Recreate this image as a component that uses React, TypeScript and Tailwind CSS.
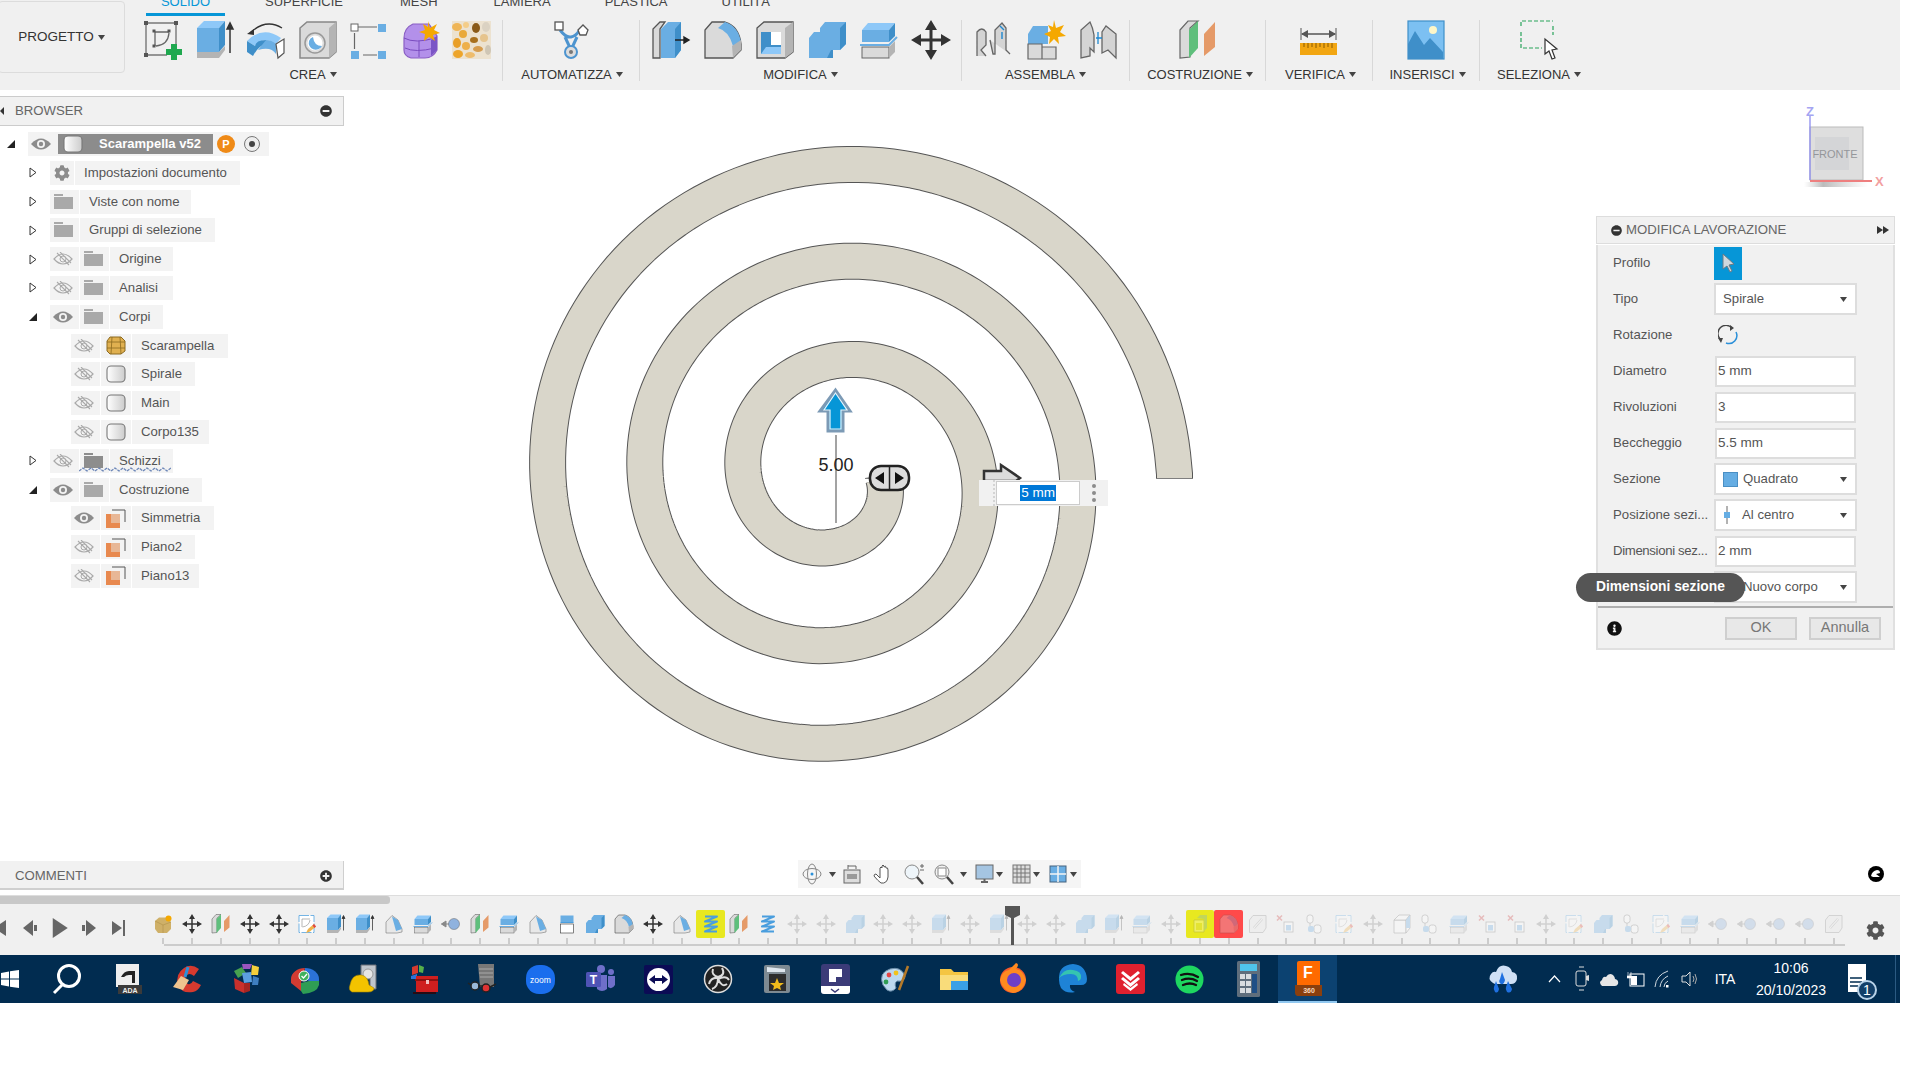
import React from "react";
import { FaCog, FaInfoCircle, FaMinusCircle, FaPlusCircle } from "react-icons/fa";

type IconProps = { size?: number };

const Svg = ({ size = 40, children }: IconProps & { children: React.ReactNode }) => (
  <svg width={size} height={size} viewBox="0 0 40 40" className="shrink-0">{children}</svg>
);

const BLUE = "#6aaee3", TOP = "#8ec8f8", SIDE = "#3f8fc9", GR = "#dadada", GS = "#b4b4b4";

const SketchIcon = ({ size }: IconProps) => (
  <Svg size={size}>
    <path d="M3 3H33M3 3V35M3 35H24M33 3V24" stroke="#777" strokeWidth="1.4" fill="none" />
    {[[3, 3], [33, 3], [3, 35]].map(([x, y]) => <rect key={x + "-" + y} x={x - 2} y={y - 2} width="4" height="4" fill="#555" />)}
    <path d="M12 12H26M12 12V26M13 26Q25 25 26 13" stroke="#666" strokeWidth="1.3" fill="none" />
    {[[11, 11], [26, 11], [11, 26]].map(([x, y]) => <rect key={x + "-" + y} x={x - 1.5} y={y - 1.5} width="3" height="3" fill="#555" />)}
    <path d="M28 24h6v5h5v6h-5v5h-6v-5h-5v-6h5z" fill="#1fa84f" />
  </Svg>
);
const ExtrudeIcon = ({ size }: IconProps) => (
  <Svg size={size}>
    <path d="M2 32H24L30 26V30L24 38H2Z" fill={GS} />
    <path d="M2 8L9 1H30L24 8Z" fill={TOP} />
    <path d="M24 8L30 1V25L24 32Z" fill={SIDE} />
    <rect x="2" y="8" width="22" height="24" fill={BLUE} />
    <path d="M35 33V5M32 9L35 3L38 9Z" stroke="#333" strokeWidth="1.5" fill="#333" />
  </Svg>
);
const RevolveIcon = ({ size }: IconProps) => (
  <Svg size={size}>
    <path d="M4 13Q20 -2 36 8" stroke="#333" strokeWidth="1.3" fill="none" />
    <path d="M1 14L8 9L8 15Z" fill="#333" />
    <path d="M1 21Q17 5 35 18L30 24Q18 15 9 26Z" fill={TOP} />
    <path d="M1 21V32L7 36Q12 26 20 24V20Q10 20 9 26Z" fill={SIDE} />
    <path d="M20 20Q26 20 30 24V34Q25 26 12 30Z" fill={BLUE} />
    <path d="M30 24L38 19V33L32 38Z" fill="#fff" stroke="#555" strokeWidth="1.2" />
  </Svg>
);
const HoleIcon = ({ size }: IconProps) => (
  <Svg size={size}>
    <path d="M2 8L9 2H38V32L31 38H2Z" fill={GR} stroke="#888" strokeWidth="1.5" />
    <path d="M31 8L38 2V32L31 38Z" fill={GS} />
    <circle cx="17" cy="23" r="10" fill="#ddd" stroke="#999" strokeWidth="1.5" />
    <circle cx="17" cy="23" r="7.5" fill="#fff" />
    <path d="M11 21A7 7 0 0 0 24 26Q16 26 15 17Q12 18 11 21Z" fill={BLUE} />
  </Svg>
);
const FormIcon = ({ size }: IconProps) => (
  <Svg size={size}>
    <path d="M9 7H28M14 35H28" stroke="#666" strokeWidth="1.2" fill="none" />
    <rect x="2" y="4" width="7" height="7" fill="#fff" stroke="#666" />
    {[[29, 4], [2, 31], [29, 31]].map(([x, y]) => <rect key={x + "-" + y} x={x} y={y} width="8" height="8" fill={BLUE} />)}
    <path d="M5.5 13V29" stroke="#666" strokeWidth="1.2" />
  </Svg>
);
const PrimitiveIcon = ({ size }: IconProps) => (
  <Svg size={size}>
    <path d="M3 18Q3 8 12 4H28L36 16V30Q32 38 24 38H10Q3 36 3 30Z" fill="#b390ea" stroke="#8a5fc4" strokeWidth="1.2" />
    <path d="M3 18Q14 24 34 18M18 21V37M4 28Q14 33 34 28" stroke="#7a4cc0" strokeWidth="1" fill="none" />
    <path d="M30 20L36 16V30L30 36Z" fill="#7b55c6" />
    <path d="M27 1L29 8L36 4L33 10L39 13L32 15L34 21L28 17L23 21L24 14L18 12L24 10L22 4L27 7Z" fill="#f5a800" />
  </Svg>
);
const TextureIcon = ({ size }: IconProps) => (
  <Svg size={size}>
    <rect x="0" y="1" width="39" height="38" fill="#ece2d0" />
    <ellipse cx="5" cy="7" rx="5" ry="4" fill="#efb556" />
    <ellipse cx="14" cy="5" rx="3" ry="3" fill="#f4cd88" />
    <ellipse cx="24" cy="8" rx="4" ry="5" fill="#8a5a18" />
    <ellipse cx="34" cy="7" rx="4" ry="5" fill="#dbd2c2" />
    <ellipse cx="11" cy="14" rx="4" ry="4" fill="#e9a93a" />
    <ellipse cx="22" cy="20" rx="4" ry="3" fill="#a8701e" />
    <ellipse cx="32" cy="18" rx="4" ry="4" fill="#e6c48d" />
    <ellipse cx="5" cy="23" rx="4" ry="5" fill="#e99f26" />
    <ellipse cx="14" cy="26" rx="4" ry="4" fill="#eeb04a" />
    <ellipse cx="26" cy="29" rx="5" ry="3" fill="#d69c4e" />
    <ellipse cx="36" cy="30" rx="3" ry="5" fill="#cfc6b5" />
    <ellipse cx="6" cy="34" rx="5" ry="4" fill="#eda52b" />
    <ellipse cx="18" cy="35" rx="5" ry="3" fill="#eebc6c" />
  </Svg>
);
const AutomateIcon = ({ size }: IconProps) => (
  <Svg size={size}>
    <path d="M9 10Q15 18 20 17Q25 16 28 11M14 17L20 30L26 17" stroke="#4d94cf" strokeWidth="3" fill="none" />
    <rect x="4" y="2" width="8" height="8" fill="#fff" stroke="#555" strokeWidth="1.3" />
    <path d="M27 10L32 5L37 10L35 15H29Z" fill="#fff" stroke="#555" strokeWidth="1.3" />
    <circle cx="20" cy="32" r="6" fill="#ddd" stroke="#4d94cf" strokeWidth="2" />
    <circle cx="20" cy="32" r="2" fill="#777" />
  </Svg>
);
const PressIcon = ({ size }: IconProps) => (
  <Svg size={size}>
    <path d="M2 38V9L9 2H14L9 9V38Z" fill={GR} stroke="#555" strokeWidth="1.3" />
    <path d="M10 9L17 2H30V30L24 38H10Z" fill={BLUE} />
    <path d="M24 9L30 2V30L24 38Z" fill={SIDE} />
    <path d="M24 20H36M33 17L38 20L33 23Z" stroke="#222" strokeWidth="1.4" fill="#222" />
  </Svg>
);
const FilletIcon = ({ size }: IconProps) => (
  <Svg size={size}>
    <path d="M2 38V10L9 2H22Q36 6 38 24V30L30 38Z" fill={GR} stroke="#555" strokeWidth="1.3" />
    <path d="M15 8L22 2Q35 6 38 22L30 26Q26 11 15 8Z" fill={BLUE} />
    <path d="M29 26L38 20V30L30 38Z" fill={GS} />
  </Svg>
);
const ShellIcon = ({ size }: IconProps) => (
  <Svg size={size}>
    <path d="M2 8L9 2H38V32L30 38H2Z" fill={GR} stroke="#555" strokeWidth="1.3" />
    <path d="M30 8L38 2V32L30 38Z" fill={GS} />
    <rect x="6" y="12" width="20" height="22" fill="#fff" />
    <path d="M6 12H16V25H26V34H6Z" fill={SIDE} />
    <path d="M11 27H26V34H6Z" fill={TOP} />
  </Svg>
);
const CombineIcon = ({ size }: IconProps) => (
  <Svg size={size}>
    <path d="M13 8L18 2H39V24L33 30H24V38H2V18L7 12H13Z" fill={BLUE} />
    <path d="M33 8L39 2V24L33 30Z" fill={SIDE} />
    <path d="M24 30L20 38H26V30Z" fill={SIDE} />
  </Svg>
);
const SplitIcon = ({ size }: IconProps) => (
  <Svg size={size}>
    <path d="M3 10L9 3H36L30 10Z" fill={TOP} />
    <rect x="3" y="10" width="27" height="12" fill={BLUE} />
    <path d="M30 10L36 3V16L30 22Z" fill={SIDE} />
    <path d="M1 25H30L38 17" stroke={BLUE} strokeWidth="2" fill="none" />
    <rect x="3" y="27" width="27" height="11" fill={GR} stroke="#666" strokeWidth="1" />
    <path d="M30 27L36 21V32L30 38Z" fill={GS} />
  </Svg>
);
const MoveIcon = ({ size, color = "#333" }: IconProps & { color?: string }) => (
  <Svg size={size}>
    <path d="M20 4V36M4 20H36" stroke={color} strokeWidth="3" />
    <path d="M20 0L26 10H14ZM20 40L26 30H14ZM0 20L10 14V26ZM40 20L30 14V26Z" fill={color} />
  </Svg>
);
const JointIcon = ({ size }: IconProps) => (
  <Svg size={size}>
    <path d="M3 36V12Q8 6 12 12V25L7 30L12 36M16 20L19 34H21V10L28 3L32 8V30L36 34" stroke="#666" strokeWidth="1.3" fill="#d4d4d4" />
    <path d="M26 6L30 10M28 12V19" stroke="#1e88d0" strokeWidth="1.4" />
  </Svg>
);
const NewCompIcon = ({ size }: IconProps) => (
  <Svg size={size}>
    <path d="M2 14L7 6H22V24H2Z" fill={BLUE} />
    <path d="M2 24H16V39H2ZM16 27H30V39H16Z" fill={GR} stroke="#666" strokeWidth="1.2" />
    <path d="M28 0L30 8L38 5L34 12L40 16L32 17L33 24L28 19L23 24L24 17L18 14L25 11L22 5L27 7Z" fill="#f5a800" />
  </Svg>
);
const JointAsBuiltIcon = ({ size }: IconProps) => (
  <Svg size={size}>
    <path d="M3 38V10L12 2Q15 8 16 15V32L12 28V36ZM24 33V12L28 6L38 14V38L30 30Z" fill="#d4d4d4" stroke="#666" strokeWidth="1.3" />
    <path d="M20 12V24M18 18H24" stroke="#1e88d0" strokeWidth="1.3" />
  </Svg>
);
const PlaneIcon = ({ size }: IconProps) => (
  <Svg size={size}>
    <path d="M2 10L10 1H20L12 8V37L2 38Z" fill={GR} stroke="#666" strokeWidth="1.2" />
    <path d="M11 38V10L20 1V28Z" fill="#5fbf7c" />
    <path d="M26 36V14L37 2V27Z" fill="#e59a68" />
  </Svg>
);
const MeasureIcon = ({ size }: IconProps) => (
  <Svg size={size}>
    <path d="M2 8V20M37 8V20" stroke="#555" strokeWidth="1" />
    <path d="M3 14H36" stroke="#555" strokeWidth="1.5" />
    <path d="M2 14L9 10V18ZM37 14L30 10V18Z" fill="#555" />
    <rect x="1" y="23" width="37" height="12" fill="#f2a612" />
    <path d="M5 23v4M9 23v5M13 23v4M17 23v5M21 23v4M25 23v5M29 23v4M33 23v5" stroke="#8a5b00" strokeWidth="1" />
  </Svg>
);
const ImageIcon = ({ size }: IconProps) => (
  <Svg size={size}>
    <rect x="2" y="1" width="36" height="38" fill="#7cc0f2" stroke="#3f8fc9" strokeWidth="1.2" />
    <path d="M2 39V24L9 11L18 25L24 18L37 32V39Z" fill="#3f8fc9" />
    <circle cx="27" cy="10" r="4" fill="#fdf6c8" />
  </Svg>
);
const SelectIcon = ({ size }: IconProps) => (
  <Svg size={size}>
    <path d="M1 6V1H33M1 12V28H22M33 6V15" stroke="#29a35a" strokeWidth="1.2" strokeDasharray="4 2" fill="none" />
    <path d="M25 19L25 34L29 31L32 39L35 38L32 30L37 29Z" fill="#fff" stroke="#333" strokeWidth="1.2" />
  </Svg>
);
const BodySparkIcon = ({ size }: IconProps) => (
  <Svg size={size}>
    <path d="M4 14L12 7H28L36 16V30L28 38H10L4 30Z" fill="#cfb068" />
    <path d="M4 14L20 22L36 16M20 22V38" stroke="#a88a44" fill="none" />
    <circle cx="31" cy="9" r="6" fill="#f5a800" />
  </Svg>
);
const DotIcon = ({ size, dark }: IconProps & { dark?: boolean }) => (
  <Svg size={size}>
    <path d="M1 20H16M1 20L10 14V26Z" fill={dark ? "#222" : "#888"} stroke={dark ? "#222" : "#888"} strokeWidth="2" />
    <circle cx="26" cy="20" r="11" fill="#8fb2de" stroke="#666" strokeWidth="1" />
  </Svg>
);
const CoilIcon = ({ size }: IconProps) => (
  <Svg size={size}>
    <path d="M8 5H32L8 15H32L8 25H32L8 35H32" stroke="#4a9ede" strokeWidth="4" fill="none" strokeLinejoin="round" />
  </Svg>
);
const LinkIcon = ({ size }: IconProps) => (
  <Svg size={size}>
    <path d="M3 12L10 3H36V28L30 37H3Z" fill="#e8e8e8" stroke="#777" strokeWidth="1.5" />
    <path d="M12 28L28 10" stroke="#888" strokeWidth="5" fill="none" />
    <path d="M12 28L28 10" stroke="#eee" strokeWidth="2.5" fill="none" />
  </Svg>
);
const XBoxIcon = ({ size }: IconProps) => (
  <Svg size={size}>
    <path d="M2 3L12 13M12 3L2 13" stroke="#d04545" strokeWidth="3" />
    <rect x="16" y="16" width="18" height="20" fill="#fff" stroke="#666" strokeWidth="1.5" />
    <rect x="20" y="22" width="10" height="11" fill={BLUE} />
  </Svg>
);
const PinIcon = ({ size }: IconProps) => (
  <Svg size={size}>
    <rect x="4" y="2" width="12" height="16" rx="5" fill="#fff" stroke="#666" strokeWidth="1.5" />
    <path d="M10 18V24" stroke="#666" strokeWidth="1.5" />
    <rect x="18" y="22" width="14" height="16" rx="5" fill="#fff" stroke="#666" strokeWidth="1.5" />
    <rect x="6" y="24" width="12" height="12" rx="4" fill={BLUE} />
  </Svg>
);
const BoxIcon = ({ size }: IconProps) => (
  <Svg size={size}>
    <path d="M4 12H28V38H4Z" fill="#fff" stroke="#666" strokeWidth="1.5" />
    <path d="M4 12L14 2H36L28 12ZM28 12L36 2V28L28 38Z" fill="#fff" stroke="#666" strokeWidth="1.5" />
    <path d="M28 12L36 2V28L28 28Z" fill={BLUE} />
  </Svg>
);
const SketchEditIcon = ({ size }: IconProps) => (
  <Svg size={size}>
    <rect x="4" y="3" width="30" height="34" fill="#fff" stroke="#4a9ede" strokeWidth="1.5" strokeDasharray="20 3" />
    <path d="M10 10H26M10 10V26M11 26Q24 24 26 12" stroke="#888" strokeWidth="1.2" fill="none" />
    <path d="M18 38L22 30L34 20L38 25L26 35Z" fill="#f0b34a" />
    <path d="M34 20L38 25L35 28L31 23Z" fill="#e04545" />
  </Svg>
);
const MoldIcon = ({ size }: IconProps) => (
  <Svg size={size}>
    <path d="M4 38V16L16 3L28 12L36 30V36L26 38Z" fill="#e8e8e8" stroke="#777" strokeWidth="1.2" />
    <path d="M16 5L28 12L36 30L24 34Z" fill={BLUE} />
  </Svg>
);
const TabIcon = ({ size }: IconProps) => (
  <Svg size={size}>
    <rect x="7" y="3" width="26" height="14" fill={BLUE} />
    <path d="M7 17H33" stroke="#4a9ede" strokeWidth="2" />
    <rect x="7" y="20" width="26" height="18" fill="#fff" stroke="#333" strokeWidth="1.2" />
  </Svg>
);
const MultiIcon = ({ size }: IconProps) => (
  <Svg size={size}>
    <path d="M8 12H28V36H8Z" fill="#fff" stroke="#777" strokeWidth="1.4" />
    <path d="M14 8L20 2H34V28L28 34V10Z" fill={BLUE} />
    <rect x="12" y="18" width="12" height="14" fill="#d8d860" />
  </Svg>
);
const Move2 = ({ size }: IconProps) => <MoveIcon size={size} color="#888" />;

const TL_ICONS: Record<string, (p: IconProps) => React.ReactNode> = {
  body: BodySparkIcon, move: MoveIcon, gmove: Move2, plane: PlaneIcon, sketch: SketchEditIcon, ext: ExtrudeIcon,
  mold: MoldIcon, split: SplitIcon, dot: DotIcon, tab: TabIcon, comb: CombineIcon, fillet: FilletIcon, coil: CoilIcon,
  multi: MultiIcon, link: LinkIcon, xbox: XBoxIcon, pin: PinIcon, box: BoxIcon,
};

const TIMELINE = [
  "body", "move", "plane", "move", "move", "sketch", "ext", "ext", "mold", "split", "dot", "plane", "split", "mold", "tab",
  "comb", "fillet", "move", "mold", "coil", "plane", "coil", "gmove", "gmove", "comb", "gmove", "gmove", "ext", "gmove",
  "ext", "gmove", "gmove", "comb", "ext", "split", "gmove", "multi", "fillet", "link", "xbox", "pin", "sketch", "gmove",
  "box", "pin", "split", "xbox", "xbox", "gmove", "sketch", "comb", "pin", "sketch", "split", "dot", "dot", "dot", "dot", "link",
];

const Caret = () => (
  <svg width="7" height="5" viewBox="0 0 7 5" className="shrink-0"><path d="M0 0H7L3.5 5Z" fill="#444" /></svg>
);

const Group = ({ label, className, rowClass, labelClass, children }: {
  label: string; className: string; rowClass?: string; labelClass?: string; children: React.ReactNode;
}) => (
  <div className={"flex flex-col h-[61px] " + className}>
    <div className={"flex h-[40px] " + (rowClass ?? "justify-center gap-[12px]")}>{children}</div>
    <div className={"mt-[6px] flex items-center justify-center gap-[4px] text-[13px] leading-[17px] text-[#333] " + (labelClass ?? "")}>
      {label}<Caret />
    </div>
  </div>
);

const Ribbon = () => (
  <div className="h-[90px] flex bg-[#f0f0f0] overflow-hidden shrink-0">
    <div className="w-[140px] shrink-0">
      <div className="w-[127px] -ml-[2px] mt-px h-[72px] border border-[#dcdcdc] rounded-[4px] flex items-center justify-center gap-[4px] text-[13.5px] text-[#333]">
        PROGETTO<Caret />
      </div>
    </div>
    <div className="flex flex-col">
      <div className="relative h-[20px]">
        <div className="flex h-[16px] text-[13px] text-[#444] leading-[16px] overflow-hidden">
          <div className="w-[79px] border-b-[3px] border-[#0696d7] ml-[6px] text-center text-[#0696d7] -mt-[6px] h-[22px]">SOLIDO</div>
          <div className="ml-[40px] -mt-[6px]">SUPERFICIE</div>
          <div className="ml-[57px] -mt-[6px]">MESH</div>
          <div className="ml-[56px] -mt-[6px]">LAMIERA</div>
          <div className="ml-[54px] -mt-[6px]">PLASTICA</div>
          <div className="ml-[54px] -mt-[6px]">UTILITÀ</div>
        </div>
      </div>
      <div className="flex">
        <Group label="CREA" className="w-[363px] border-r border-[#d8d8d8]" rowClass="pl-[3px] gap-[11.5px]" labelClass="mr-[16px]">
          <SketchIcon /><ExtrudeIcon /><RevolveIcon /><HoleIcon /><FormIcon /><PrimitiveIcon /><TextureIcon />
        </Group>
        <Group label="AUTOMATIZZA" className="w-[137px] border-r border-[#d8d8d8]" labelClass="ml-[2px]"><AutomateIcon /></Group>
        <Group label="MODIFICA" className="w-[322px] border-r border-[#d8d8d8]">
          <PressIcon /><FilletIcon /><ShellIcon /><CombineIcon /><SplitIcon /><MoveIcon />
        </Group>
        <Group label="ASSEMBLA" className="w-[168px] border-r border-[#d8d8d8]">
          <JointIcon /><NewCompIcon /><JointAsBuiltIcon />
        </Group>
        <Group label="COSTRUZIONE" className="w-[136px] border-r border-[#d8d8d8]" labelClass="ml-[5px]"><PlaneIcon /></Group>
        <Group label="VERIFICA" className="w-[107px] border-r border-[#d8d8d8]" labelClass="ml-[3px]"><MeasureIcon /></Group>
        <Group label="INSERISCI" className="w-[107px] border-r border-[#d8d8d8]" labelClass="ml-[3px]"><ImageIcon /></Group>
        <Group label="SELEZIONA" className="w-[120px]" labelClass="mr-[2px]"><SelectIcon /></Group>
      </div>
    </div>
  </div>
);

const Eye = ({ off }: { off?: boolean }) => off ? (
  <svg width="20" height="14" viewBox="0 0 20 14">
    <path d="M1 7Q10 -3 19 7Q10 17 1 7Z" fill="none" stroke="#aaa" strokeWidth="1.2" />
    <circle cx="10" cy="7" r="3" fill="none" stroke="#aaa" />
    <path d="M4 1L16 13M7 0L18 11" stroke="#aaa" strokeWidth="1.1" />
  </svg>
) : (
  <svg width="20" height="14" viewBox="0 0 20 14">
    <path d="M0 7Q10 -4 20 7Q10 18 0 7Z" fill="#8c8c8c" />
    <circle cx="10" cy="7" r="4" fill="#f3f3f3" />
    <circle cx="10" cy="7" r="2.2" fill="#8c8c8c" />
  </svg>
);

const Folder = ({ squiggle }: { squiggle?: boolean }) => (
  <svg width="20" height="16" viewBox="0 0 20 16">
    <path d="M0 0H9V2H0ZM0 3H19V15H0Z" fill={squiggle ? "#8d8d8d" : "#a9a9a9"} />
  </svg>
);
const Gear = () => <FaCog size={16} color="#8c8c8c" />;
const BodyTile = () => (
  <svg width="20" height="18" viewBox="0 0 20 18">
    <rect x="1" y="1" width="18" height="16" rx="4" fill="url(#bodyTile)" stroke="#777" strokeWidth="1.1" />
    <defs><linearGradient id="bodyTile" x1="0" x2="1"><stop stopColor="#fff" /><stop offset="1" stopColor="#ccc" /></linearGradient></defs>
  </svg>
);
const GoldBody = () => (
  <svg width="20" height="19" viewBox="0 0 20 19">
    <path d="M4 1H15L19 5V15L15 18H4L1 15V5Z" fill="#e0b050" stroke="#8c6a20" />
    <path d="M1 6H19M1 12H19M6 1L5 18M14 1L15 18" stroke="#8c6a20" strokeWidth="0.8" fill="none" />
  </svg>
);
const OrangePlane = () => (
  <svg width="20" height="19" viewBox="0 0 20 19">
    <path d="M6 1H19V13" stroke="#555" fill="none" />
    <rect x="0" y="5" width="14" height="14" fill="#e8894f" />
    <rect x="5" y="5" width="9" height="9" fill="#e8b796" />
  </svg>
);

const Tri = ({ open }: { open?: boolean }) => open ? (
  <svg width="8" height="8" viewBox="0 0 8 8"><path d="M0 8L8 0V8Z" fill="#222" /></svg>
) : (
  <svg width="8" height="11" viewBox="0 0 8 11"><path d="M1 1L7 5.5L1 10Z" fill="#fff" stroke="#333" /></svg>
);

const Cell = ({ className, children }: { className: string; children?: React.ReactNode }) => (
  <div className={"h-[24px] flex items-center bg-[#f3f3f3] " + className}>{children}</div>
);

const Row = ({ level, open, eye, icon, text, iconClass, textClass }: {
  level: 1 | 2; open?: boolean; eye?: "on" | "off"; icon: React.ReactNode; text: string; iconClass: string; textClass: string;
}) => (
  <div className={"flex items-center h-[24px] " + (level === 1 ? "pl-[29px]" : "pl-[71px]")}>
    {level === 1 && <div className="w-[21px] flex items-center"><Tri open={open} /></div>}
    {eye && <Cell className="w-[29px] justify-center pr-[3px] mr-px"><Eye off={eye === "off"} /></Cell>}
    <Cell className={"justify-center pr-px mr-px " + iconClass}>{icon}</Cell>
    <Cell className={"text-[13.2px] text-[#555] whitespace-nowrap " + textClass}>{text}</Cell>
  </div>
);

const Tree = () => (
  <div className="flex flex-col gap-[4.8px] pt-[6px]">
    <div className="flex items-center h-[24px] pl-[7px]">
      <div className="w-[21px]"><Tri open /></div>
      <div className="h-[24px] w-[241px] bg-[#f3f3f3] flex items-center">
        <div className="w-[30px] flex justify-center pr-[4px]"><Eye /></div>
        <div className="h-[20px] w-[155px] bg-[#8c8c8c] flex items-center pl-[5px] text-[13px] font-bold text-white">
          <BodyTile /><span className="ml-[16px]">Scarampella v52</span>
        </div>
        <div className="ml-[4px] w-[18px] h-[18px] rounded-full bg-[#ef8a17] text-white text-[11px] font-bold flex items-center justify-center">P</div>
        <div className="ml-[9px] w-[16px] h-[16px] rounded-full border border-[#777] bg-[#eee] flex items-center justify-center">
          <div className="w-[6px] h-[6px] rounded-full bg-[#444]" />
        </div>
      </div>
    </div>
    <Row level={1} icon={<Gear />} text="Impostazioni documento" iconClass="w-[24px]" textClass="w-[165px] pl-[9px]" />
    <Row level={1} icon={<Folder />} text="Viste con nome" iconClass="w-[29px]" textClass="w-[111px] pl-[9px]" />
    <Row level={1} icon={<Folder />} text="Gruppi di selezione" iconClass="w-[29px]" textClass="w-[135px] pl-[9px]" />
    <Row level={1} eye="off" icon={<Folder />} text="Origine" iconClass="w-[29px]" textClass="w-[63px] pl-[9px]" />
    <Row level={1} eye="off" icon={<Folder />} text="Analisi" iconClass="w-[29px]" textClass="w-[63px] pl-[9px]" />
    <Row level={1} open eye="on" icon={<Folder />} text="Corpi" iconClass="w-[29px]" textClass="w-[53px] pl-[9px]" />
    <Row level={2} eye="off" icon={<GoldBody />} text="Scarampella" iconClass="w-[30px]" textClass="w-[96px] pl-[9px]" />
    <Row level={2} eye="off" icon={<BodyTile />} text="Spirale" iconClass="w-[30px]" textClass="w-[63px] pl-[9px]" />
    <Row level={2} eye="off" icon={<BodyTile />} text="Main" iconClass="w-[30px]" textClass="w-[48px] pl-[9px]" />
    <Row level={2} eye="off" icon={<BodyTile />} text="Corpo135" iconClass="w-[30px]" textClass="w-[77px] pl-[9px]" />
    <div className="relative">
      <Row level={1} eye="off" icon={<Folder squiggle />} text="Schizzi" iconClass="w-[29px]" textClass="w-[63px] pl-[9px]" />
      <svg className="absolute left-[79px] top-[18px]" width="92" height="5" viewBox="0 0 92 5">
        <path d="M0 4L4 1L8 4L12 1L16 4L20 1L24 4L28 1L32 4L36 1L40 4L44 1L48 4L52 1L56 4L60 1L64 4L68 1L72 4L76 1L80 4L84 1L88 4L92 1" stroke="#6d87b8" strokeWidth="1.3" strokeDasharray="3 1" fill="none" />
      </svg>
    </div>
    <Row level={1} open eye="on" icon={<Folder />} text="Costruzione" iconClass="w-[29px]" textClass="w-[92px] pl-[9px]" />
    <Row level={2} eye="on" icon={<OrangePlane />} text="Simmetria" iconClass="w-[30px]" textClass="w-[82px] pl-[9px]" />
    <Row level={2} eye="off" icon={<OrangePlane />} text="Piano2" iconClass="w-[30px]" textClass="w-[63px] pl-[9px]" />
    <Row level={2} eye="off" icon={<OrangePlane />} text="Piano13" iconClass="w-[30px]" textClass="w-[67px] pl-[9px]" />
  </div>
);

const LeftColumn = () => (
  <div className="w-[344px] shrink-0 flex flex-col pt-[6px] pb-[5px] relative z-10">
    <div className="h-[30px] bg-[#f1f1f1] border border-l-0 border-[#cccccc] flex items-center pr-[11px] text-[13.2px] text-[#666]">
      <svg width="4" height="8" viewBox="0 0 4 8"><path d="M4 0V8L0 4Z" fill="#333" /></svg>
      <span className="ml-[11px] mr-auto">BROWSER</span><FaMinusCircle size={12} color="#333" />
    </div>
    <Tree />
    <div className="mt-auto h-[29px] bg-[#f1f1f1] border-b-2 border-r border-[#cfcfcf] flex items-center pt-[2px] pl-[15px] pr-[11px] justify-between text-[13.2px] text-[#666]">
      COMMENTI<FaPlusCircle size={12} color="#333" />
    </div>
  </div>
);

// punti della spirale: parte a destra del centro, gira in senso orario e finisce con un taglio orizzontale
const spiralPath = (cx: number, cy: number, r0: number, pitch: number, to: number, over: number) => {
  const rev = 2 * Math.PI;
  const radius = (t: number) => {
    const dent = t < rev * 0.25 ? (t / (rev * 0.25)) * 2.5 : t < rev * 1.75 ? (2.5 * (rev * 1.75 - t)) / (rev * 1.5) : 0;
    return r0 + (pitch * t) / rev - dent;
  };
  const pts: string[] = [];
  for (let t = 0; t <= to - 0.05; t += Math.PI / 90) {
    pts.push((cx + radius(t) * Math.cos(t)).toFixed(2) + " " + (cy + radius(t) * Math.sin(t)).toFixed(2));
  }
  const endX = (cx + radius(to)).toFixed(2);
  pts.push(endX + " " + (cy - 4), endX + " " + (cy + over));
  return "M" + (cx + r0).toFixed(2) + " " + (cy + over).toFixed(2) + "L" + pts.join("L");
};

const Spiral = () => (
  <svg className="absolute left-0 top-0" width="1000" height="805" viewBox="0 0 1000 805">
    <path d={spiralPath(493, 388, 46.5, 97, 6 * Math.PI, 0.8)} fill="none" stroke="#555" strokeWidth="37" />
    <path d={spiralPath(493, 388, 46.5, 97, 6 * Math.PI, 0)} fill="none" stroke="#d9d6ca" strokeWidth="35" />
    <path d="M492 345V433" stroke="#666" strokeWidth="1.2" />
    <text x="492" y="381" textAnchor="middle" fontSize="18" fill="#222" fontFamily="Liberation Sans, sans-serif">5.00</text>
    <path d="M491.5 300L506 321H499V341H484V321H476Z" fill="#0696d7" stroke="#7c9ab5" strokeWidth="3" />
    <path d="M491.5 303L503 320H497V339H486V320H480Z" fill="#0696d7" stroke="#e8f3fa" strokeWidth="1.2" />
    <path d="M640 391V381H657V375L676 388L672 391Z" fill="#dcdcdc" stroke="#333" strokeWidth="2.5" />
    <rect x="526" y="376" width="39" height="24" rx="11" fill="#dcdcdc" stroke="#222" strokeWidth="2.5" />
    <path d="M545.5 376V400" stroke="#222" strokeWidth="1.5" />
    <path d="M540 382V394L531 388ZM551 382V394L560 388Z" fill="#111" />
  </svg>
);

const Floating = () => (
  <div className="absolute left-[635px] top-[390px] w-[129px] h-[26px] bg-[#f1f1f1] flex items-center">
    <div className="w-[16px] h-full border-r-2 border-[#d4d4d4] border-dotted" />
    <div className="ml-px w-[84px] h-[24px] bg-white border border-[#cccccc] flex items-center justify-center text-[13.5px]">
      <span className="bg-[#0078d7] text-white leading-[16px] px-px">5 mm</span>
    </div>
    <div className="ml-[12px] flex flex-col gap-[3px]">
      <div className="w-[4px] h-[4px] rounded-full bg-[#8c8c8c]" />
      <div className="w-[4px] h-[4px] rounded-full bg-[#8c8c8c]" />
      <div className="w-[4px] h-[4px] rounded-full bg-[#8c8c8c]" />
    </div>
  </div>
);

const ViewCube = () => (
  <svg className="absolute left-[1452px] top-[10px]" width="96" height="100" viewBox="0 0 96 100" fontFamily="Liberation Sans, sans-serif">
    <defs><linearGradient id="cubeShadow" x1="0" x2="1"><stop stopColor="#ccc" stopOpacity="0" /><stop offset="0.3" stopColor="#bbb" /><stop offset="1" stopColor="#ccc" stopOpacity="0" /></linearGradient></defs>
    <rect x="8" y="82" width="64" height="5" fill="url(#cubeShadow)" />
    <rect x="14" y="27" width="53" height="53" fill="#dedede" stroke="#bbbbbb" />
    <rect x="19" y="37" width="34" height="33" fill="#d4d5d7" />
    <text x="39" y="58" textAnchor="middle" fontSize="11" fill="#94969a">FRONTE</text>
    <path d="M14 16V80" stroke="#8d8df0" strokeWidth="1.3" />
    <path d="M14 81H76" stroke="#ee7f7f" strokeWidth="2" />
    <text x="10" y="16" fontSize="13" fontWeight="bold" fill="#a5a5f2">Z</text>
    <text x="79" y="86" fontSize="13" fontWeight="bold" fill="#f2a0a0">X</text>
  </svg>
);

const Label = ({ children, className }: { children?: React.ReactNode; className?: string }) => (
  <div className={"w-[116px] pl-[15px] text-[13.2px] text-[#555] whitespace-nowrap " + (className ?? "")}>{children}</div>
);
const Sel = ({ icon, text, gapClass }: { icon?: React.ReactNode; text: string; gapClass?: string }) => (
  <div className="w-[143px] h-[32px] bg-white border-2 border-[#dddddd] flex items-center pl-[7px] pr-[8px] text-[13.2px] text-[#555]">
    {icon}<span className={gapClass ?? ""}>{text}</span><span className="ml-auto"><Caret /></span>
  </div>
);
const Inp = ({ text }: { text: string }) => (
  <div className="ml-px w-[141px] h-[31px] bg-white border-2 border-[#dddddd] flex items-center pl-px text-[13.5px] text-[#555]">{text}</div>
);
const FRow = ({ children }: { children: React.ReactNode }) => <div className="h-[36px] flex items-center">{children}</div>;

const Dialog = () => (
  <div className="absolute left-[1252px] top-[126px] w-[299px] z-10">
    <div className="h-[28px] bg-[#f1f1f1] border border-[#dddddd] flex items-center pl-[14px] pr-[5px] text-[13.2px] text-[#666] mb-px">
      <FaMinusCircle size={11} color="#333" /><span className="ml-[4px]">MODIFICA LAVORAZIONE</span>
      <svg className="ml-auto" width="12" height="8" viewBox="0 0 12 8"><path d="M0 0L6 4L0 8ZM6 0L12 4L6 8Z" fill="#333" /></svg>
    </div>
    <div className="bg-[#f1f1f1] border-2 border-t-0 border-[#e0e0e0]">
      <FRow><Label>Profilo</Label>
        <div className="w-[28px] h-[33px] bg-[#0696d7] flex items-center justify-center">
          <svg width="14" height="20" viewBox="0 0 14 20"><path d="M2 1V16L6 13L9 19L11 18L8 12L13 11Z" fill="#cfd8dd" stroke="#6a7a85" /></svg>
        </div>
      </FRow>
      <FRow><Label>Tipo</Label><Sel text="Spirale" /></FRow>
      <FRow><Label>Rotazione</Label>
        <svg className="ml-[4px]" width="20" height="20" viewBox="0 0 20 20"><path d="M2 14A8 8 0 0 1 14 3" fill="none" stroke="#444" strokeWidth="1.4" /><path d="M18 7A8 8 0 0 1 8 18" fill="none" stroke="#2b90d9" strokeWidth="1.5" /><path d="M12 0L16 3L12 6ZM0 13L5 13L3 18Z" fill="#444" /></svg>
      </FRow>
      <FRow><Label>Diametro</Label><Inp text="5 mm" /></FRow>
      <FRow><Label>Rivoluzioni</Label><Inp text="3" /></FRow>
      <FRow><Label>Beccheggio</Label><Inp text="5.5 mm" /></FRow>
      <FRow><Label>Sezione</Label><Sel text="Quadrato" gapClass="ml-[5px]" icon={<div className="w-[15px] h-[15px] bg-[#65ade3] border border-[#4a8fc4]" />} /></FRow>
      <FRow><Label>Posizione sezi...</Label>
        <Sel text="Al centro" gapClass="ml-[4px]" icon={
          <svg width="15" height="18" viewBox="0 0 15 18"><path d="M4 0V18" stroke="#666" /><rect x="1" y="6" width="6" height="6" fill="#65ade3" /></svg>
        } />
      </FRow>
      <FRow><Label className="tracking-[-0.35px]">Dimensioni sez...</Label><Inp text="2 mm" /></FRow>
      <FRow><Label /><Sel text="Nuovo corpo" gapClass="ml-[5px]" icon={<div className="w-[15px] h-[15px]" />} /></FRow>
      <div className="mt-px h-[42px] border-t-2 border-[#aeaeae] flex items-center pl-[9px]">
        <FaInfoCircle size={15} color="#111" />
        <div className="ml-[103px] w-[72px] h-[23px] bg-[#e8e8e8] border-2 border-[#cfcfcf] flex items-center justify-center text-[14.5px] text-[#777]">OK</div>
        <div className="ml-[12px] w-[72px] h-[23px] bg-[#e8e8e8] border-2 border-[#cfcfcf] flex items-center justify-center text-[14.5px] text-[#777]">Annulla</div>
      </div>
    </div>
    <div className="absolute -left-[20px] top-[357px] w-[169px] h-[29px] rounded-full bg-[#555555] flex items-center pl-[20px] text-[13.8px] font-bold text-white whitespace-nowrap">
      Dimensioni sezione
    </div>
  </div>
);

const NavBar = () => (
  <div className="ml-[454px] w-[283px] h-[28px] bg-[#f5f5f5] flex items-center pl-[4px]">
    <svg width="20" height="22" viewBox="0 0 20 22"><ellipse cx="10" cy="11" rx="9" ry="5.5" fill="none" stroke="#888" /><ellipse cx="10" cy="11" rx="4.5" ry="10" fill="none" stroke="#888" /><circle cx="10" cy="11" r="1.5" fill="#2b90d9" /></svg>
    <span className="ml-[7px]"><Caret /></span>
    <svg className="ml-[6px]" width="20" height="20" viewBox="0 0 20 20"><rect x="2" y="6" width="16" height="13" fill="#ddd" stroke="#666" /><rect x="5" y="10" width="10" height="5" fill="#999" /><path d="M6 5V1M14 5V2M6 2H14" stroke="#666" /></svg>
    <svg className="ml-[11px]" width="20" height="22" viewBox="0 0 20 22"><path d="M3 11L7 15V5Q8 3 9 5V3Q10 1 11 3V4Q13 2 13 5Q15 4 15 7V14Q14 21 8 20Q5 18 1 13Q1 11 3 11Z" fill="#fff" stroke="#555" /></svg>
    <svg className="ml-[11px]" width="20" height="21" viewBox="0 0 20 21"><circle cx="8" cy="8" r="7" fill="#eef5fa" stroke="#888" /><path d="M13 13L19 20" stroke="#444" strokeWidth="2.5" /><path d="M16 2H20M18 0V4M16 6H20" stroke="#666" /></svg>
    <svg className="ml-[10px]" width="20" height="21" viewBox="0 0 20 21"><circle cx="8" cy="8" r="7" fill="#f3f3f3" stroke="#888" /><rect x="4" y="4" width="8" height="8" fill="#fff" stroke="#888" /><path d="M13 13L19 20" stroke="#444" strokeWidth="2.5" /></svg>
    <span className="ml-[6px]"><Caret /></span>
    <svg className="ml-[8px]" width="19" height="21" viewBox="0 0 19 21"><rect x="1" y="1" width="17" height="14" fill="#a5c5e2" stroke="#666" /><path d="M6 18H13M9.5 15V18" stroke="#666" strokeWidth="2" /></svg>
    <span className="ml-[2px]"><Caret /></span>
    <svg className="ml-[9px]" width="19" height="20" viewBox="0 0 19 20">
      <rect x="1" y="1" width="17" height="18" fill="#ddd" stroke="#777" />
      <path d="M5 1V19M9 1V19M13 1V19M1 5H18M1 9H18M1 13H18" stroke="#777" />
    </svg>
    <span className="ml-[2px]"><Caret /></span>
    <svg className="ml-[9px]" width="18" height="18" viewBox="0 0 18 18"><rect x="1" y="1" width="16" height="16" fill="#6aaee3" stroke="#44637f" /><path d="M9 1V17M1 9H17" stroke="#f5f5f5" strokeWidth="1.5" /></svg>
    <span className="ml-[3px]"><Caret /></span>
  </div>
);

const TransportBtn = ({ d, className }: { d: string; className: string }) => (
  <svg className={className} width="16" height="20" viewBox="0 0 16 20"><path d={d} fill="#666" /></svg>
);

const Timeline = () => (
  <div className="relative h-[60px] bg-[#f0f0f0] border-t border-[#dddddd] shrink-0">
    <div className="h-[8px] w-[390px] bg-[#c8c8c8] rounded-r-[3px]" />
    <div className="flex pt-[6px]">
      <div className="w-[149px] shrink-0 flex items-center pb-[1px] overflow-hidden">
        <TransportBtn className="-ml-[9px]" d="M15 2V18L3 10Z" />
        <TransportBtn className="ml-[15px]" d="M11 2V18L1 10ZM12 7H15V13H12Z" />
        <TransportBtn className="ml-[13px] scale-125" d="M3 2L15 10L3 18Z" />
        <TransportBtn className="ml-[14px]" d="M1 7H4V13H1ZM5 2L15 10L5 18Z" />
        <TransportBtn className="ml-[14px]" d="M1 3L11 10L1 17ZM12 2H14V18H12Z" />
      </div>
      <div>
        <div className="flex">
          {TIMELINE.map((k, i) => {
            const Ic = TL_ICONS[k];
            const bg = i === 19 || i === 36 ? "bg-[#e8e820]" : i === 37 ? "bg-[#ff4a4a]" : "";
            const fade = i >= 22 ? "opacity-30" : "";
            return (
              <div key={i} className="w-[28.8px] flex flex-col items-center shrink-0">
                <div className={"w-[28.8px] h-[28px] flex items-center justify-center rounded-[2px] " + bg}>
                  <div className={fade}><Ic size={20} /></div>
                </div>
                <div className="w-[2px] h-[6px] bg-[#cccccc]" />
              </div>
            );
          })}
        </div>
        <div className="h-[2px] ml-[15px] w-[1681px] bg-[#cccccc]" />
      </div>
      <div className="ml-[18px] pt-[11px]"><FaCog size={19} color="#555" /></div>
    </div>
    <div className="absolute left-[1005px] top-[10px] flex flex-col items-center">
      <div className="w-[15px] h-[9px] bg-[#555]" />
      <svg width="15" height="3" viewBox="0 0 15 3"><path d="M0 0H15L9 3H6Z" fill="#555" /></svg>
      <div className="w-[3px] h-[27px] bg-[#555]" />
    </div>
  </div>
);

const TI = ({ children }: { children: React.ReactNode }) => (
  <svg width="32" height="32" viewBox="0 0 32 32">{children}</svg>
);

const TASK_ICONS: React.ReactNode[] = [
  <svg width="18" height="18" viewBox="0 0 18 18"><path d="M0 3L8 1.5V8.5H0ZM9 1.3L18 0V8.5H9ZM0 9.5H8V16.5L0 15ZM9 9.5H18V18L9 16.7Z" fill="#fff" /></svg>,
  <svg className="-ml-[3px]" width="32" height="32" viewBox="0 0 32 32"><circle cx="18" cy="13" r="10.5" fill="none" stroke="#fff" strokeWidth="3" /><path d="M11 22L3 30" stroke="#fff" strokeWidth="3" /></svg>,
  <TI><path d="M4 1H27V24H4Z" fill="#eee" /><path d="M9 14Q12 8 17 8H23V20H20V12H17Q14 12 12 14Z" fill="#222" /><rect x="6" y="22" width="24" height="9" fill="#3a3a3a" /><text x="18" y="29.5" textAnchor="middle" fontSize="7" fontWeight="bold" fill="#eee" fontFamily="Liberation Sans, sans-serif">ADA</text></TI>,
  <TI><path d="M28 6Q20 0 13 5Q4 11 7 22Q11 31 22 29Q27 28 30 22L22 18Q20 22 17 21Q12 19 15 13Q18 9 23 13Z" fill="#d63a2f" /><path d="M17 4L14 14" stroke="#2b90d9" strokeWidth="3" /><path d="M10 13L18 17L12 27L2 24Z" fill="#eec48f" /></TI>,
  <TI><path d="M4 8L12 4L16 10L8 15Z" fill="#47a14f" /><path d="M12 1L22 1L20 6H13Z" fill="#9a55c0" /><path d="M22 2L29 4L28 12L21 12Z" fill="#f4cf3c" /><path d="M4 15L14 20V30L5 26Z" fill="#c9302c" /><path d="M14 20L20 20L20 28L14 30Z" fill="#a62522" /><path d="M12 10L21 9L22 19L14 20Z" fill="#5c9fe0" /><path d="M23 13L29 15L28 22L22 22Z" fill="#3f7fc0" /></TI>,
  <TI><path d="M16 5A14 11 0 0 1 30 16V18H20L16 16Z" fill="#2b72d8" /><path d="M16 5A14 11 0 0 0 2 16L2 20L12 28V20Z" fill="#d33b32" /><path d="M12 20L20 18H30V22Q28 30 14 31L12 28Z" fill="#2f9d54" /><circle cx="15" cy="13" r="5" fill="#3fb15d" stroke="#fff" strokeWidth="1" /><path d="M12.5 13L14.5 15L18 11" stroke="#fff" strokeWidth="1.3" fill="none" /></TI>,
  <TI><path d="M13 2H28V26H22V14H13Z" fill="#bfc5cc" stroke="#6a6f76" /><circle cx="20" cy="11" r="5" fill="#e6e6e6" stroke="#999" /><path d="M2 22Q4 11 13 12Q20 13 21 22L26 25Q26 29 20 29H4Q0 27 2 22Z" fill="#f3c300" stroke="#a88600" strokeWidth="0.6" /></TI>,
  <TI><path d="M5 4L11 2V10L5 12Z" fill="#d63a2f" /><path d="M12 2L17 4L16 10L12 9Z" fill="#57b04a" /><path d="M4 13L10 11V16H4Z" fill="#2b72d8" /><rect x="9" y="13" width="22" height="16" fill="#cf1f1f" /><rect x="8" y="16" width="23" height="2" fill="#8d1010" /><rect x="19" y="17" width="3" height="4" fill="#f2c0c0" /><path d="M6 30H29" stroke="#300" strokeWidth="1.5" /></TI>,
  <TI><path d="M12 1H28V24H14Z" fill="#777" /><path d="M13 6H27M13 10H27M14 14H27" stroke="#aaa" /><circle cx="9" cy="23" r="4" fill="#9bb9d8" stroke="#222" strokeWidth="1.5" /><circle cx="20" cy="25" r="4" fill="#d33" stroke="#222" strokeWidth="1.5" /><path d="M12 23H17M24 24L30 21M5 22L2 20" stroke="#222" strokeWidth="1.5" /></TI>,
  <svg width="29" height="29" viewBox="0 0 29 29"><rect x="0" y="0" width="29" height="29" rx="13" fill="#1a6eed" /><text x="14.5" y="18" textAnchor="middle" fontSize="8.5" fill="#fff" fontFamily="Liberation Sans, sans-serif">zoom</text></svg>,
  <TI><circle cx="17" cy="6" r="4" fill="#6f6fc9" /><circle cx="27" cy="9" r="3" fill="#6f6fc9" /><path d="M12 12H23V26Q18 30 13 26Z" fill="#6f6fc9" /><path d="M24 13H31V22Q28 27 24 24Z" fill="#6f6fc9" /><rect x="2" y="9" width="15" height="15" rx="1.5" fill="#4f53b5" /><text x="9.5" y="21" textAnchor="middle" fontSize="12" fontWeight="bold" fill="#fff" fontFamily="Liberation Sans, sans-serif">T</text></TI>,
  <svg width="29" height="29" viewBox="0 0 29 29"><rect width="29" height="29" rx="2" fill="#0b0b55" /><circle cx="14.5" cy="14.5" r="11.5" fill="#fff" /><path d="M5 14.5L11 10V13H18V10L24 14.5L18 19V16H11V19Z" fill="#0b0b55" /></svg>,
  <TI><circle cx="16" cy="16" r="13.5" fill="#222" stroke="#ddd" strokeWidth="1.5" /><path d="M20 5Q24 12 16 14Q9 12 11 6M7 21Q9 14 16 15Q16 24 10 26M25 21Q20 25 16 16Q24 12 27 17" fill="none" stroke="#ddd" strokeWidth="2" /></TI>,
  <TI><rect x="3" y="2" width="26" height="28" rx="2" fill="#7e8a92" /><path d="M6 4L24 6V9L6 9Z" fill="#dfe7ee" /><rect x="8" y="11" width="17" height="17" fill="#2d2d2d" /><path d="M16 15L18 20L23 20L19 23L20 27L16 25L12 27L13 23L9 20L14 20Z" fill="#f2bc1b" /></TI>,
  <svg width="29" height="30" viewBox="0 0 29 30"><rect y="0" width="29" height="30" rx="3" fill="#3b3b78" /><path d="M8 5H21V13H15V18H8Z" fill="#fff" /><path d="M0 22H29V27Q29 30 26 30H3Q0 30 0 27Z" fill="#fff" /><path d="M10 25L14 28L18 25" stroke="#3b3b78" strokeWidth="1.5" fill="none" /></svg>,
  <TI><path d="M4 22Q-1 10 11 6Q22 3 26 13Q26 19 18 18Q15 20 17 25Q13 30 8 27Z" fill="#bcd8ee" stroke="#6a8ca8" /><circle cx="10" cy="12" r="2.4" fill="#e54545" /><circle cx="17" cy="10" r="2.4" fill="#f2c21b" /><circle cx="7" cy="19" r="2.4" fill="#2f9d54" /><path d="M20 27L29 3" stroke="#b57a29" strokeWidth="2.5" /></TI>,
  <TI><path d="M2 6H13L16 9H30V27H2Z" fill="#f4c542" /><rect x="2" y="12" width="28" height="15" fill="#f9dc7a" /><rect x="13" y="18" width="17" height="9" fill="#3aa0e6" /></TI>,
  <TI><circle cx="16" cy="17" r="13" fill="#f3582c" /><path d="M3 17Q6 28 16 30Q26 29 29 17Q26 7 19 6Q23 1 19 0Q14 5 12 7Q5 8 3 17Z" fill="#ff8a1f" /><circle cx="17" cy="17" r="7" fill="#6e3fc7" /></TI>,
  <TI><path d="M3 17Q2 2 17 1Q30 2 31 16Q31 22 25 22H14Q13 27 19 29Q10 31 5 25Q3 21 3 17Z" fill="#1e83d6" /><path d="M3 15Q8 5 17 7Q26 8 25 15Q25 17 22 18Q22 11 15 11Q7 11 3 15Z" fill="#35c4b0" /></TI>,
  <svg width="29" height="30" viewBox="0 0 29 30"><rect width="29" height="30" rx="3" fill="#e0212f" /><path d="M7 7L14.5 13L22 7L24 9L14.5 17L5 9ZM7 13L14.5 19L22 13L24 15L14.5 23L5 15ZM8 19L14.5 24L21 19L22 21L14.5 27L7 21Z" fill="#fff" /></svg>,
  <svg width="29" height="29" viewBox="0 0 29 29"><circle cx="14.5" cy="14.5" r="14" fill="#1ed760" /><path d="M6 10Q15 7 23 12M7 15Q15 12 22 16M8 20Q15 17 21 20" stroke="#111" strokeWidth="2.3" fill="none" strokeLinecap="round" /></svg>,
  <svg width="23" height="36" viewBox="0 0 23 36"><rect width="23" height="36" rx="1.5" fill="#5f6e7c" /><rect x="3" y="3" width="17" height="7" fill="#4fc4ec" /><path d="M3 13H8V18H3ZM9 13H14V18H9ZM3 20H8V25H3ZM9 20H14V25H9ZM3 27H8V32H3ZM9 27H14V32H9Z" fill="#d9dde0" /><rect x="15" y="13" width="5" height="19" fill="#1f4f86" /></svg>,
  <svg width="28" height="35" viewBox="0 0 28 35"><path d="M3 2Q3 0 5 0H26V24H3Z" fill="#ff6a00" /><path d="M1 24H28V35H3Q1 34 1 32Z" fill="#8a3f0e" /><text x="14" y="17" textAnchor="middle" fontSize="16" fontWeight="bold" fill="#fff" fontFamily="Liberation Sans, sans-serif">F</text><text x="15" y="32" textAnchor="middle" fontSize="7" fontWeight="bold" fill="#f7d9c0" fontFamily="Liberation Sans, sans-serif">360</text></svg>,
];

const Taskbar = () => (
  <div className="h-[48px] bg-[#012c50] flex items-center shrink-0 text-white">
    <div className="flex -ml-[20px] h-full">
      {TASK_ICONS.map((ic, i) => (
        <div key={i} className={"w-[59px] h-full flex items-center justify-center " + (i === 22 ? "bg-[#0c4271] border-b-2 border-[#91c8f0]" : "")}>{ic}</div>
      ))}
    </div>
    <div className="ml-auto flex items-center h-full">
      <div className="w-[40px] flex justify-center">
        <svg width="32" height="30" viewBox="0 0 32 30"><path d="M6 19Q0 15 4 10Q6 7 9 8Q12 0 19 2Q24 3 25 8Q31 9 30 15Q29 20 24 20H8Z" fill="#cfe0f5" /><path d="M15 8L18 16Q17 21 14 20Q11 18 13 15ZM9 17L12 25Q11 30 8 28Q6 25 7 23ZM21 17L25 25Q24 30 20 28Q18 25 19 23Z" fill="#1f70e0" /></svg>
      </div>
      <div className="ml-[18px] w-[27px] flex justify-center">
        <svg width="13" height="8" viewBox="0 0 13 8"><path d="M1 7L6.5 1L12 7" stroke="#fff" strokeWidth="1.2" fill="none" /></svg>
      </div>
      <div className="w-[27px] flex justify-center">
        <svg width="14" height="26" viewBox="0 0 14 26"><rect x="1" y="5" width="10" height="15" rx="2" fill="none" stroke="#ddd" /><path d="M4 1H9M4 24H9" stroke="#ddd" strokeWidth="1.2" /><path d="M11 10L14 9V15L11 14" fill="#ddd" /></svg>
      </div>
      <div className="w-[27px] flex justify-center">
        <svg width="20" height="14" viewBox="0 0 20 14"><path d="M3 14Q-1 10 3 8Q4 4 7 5Q10 0 14 3Q16 5 16 7Q20 8 19 12Q18 14 16 14Z" fill="#e6e6e6" /></svg>
      </div>
      <div className="w-[27px] flex justify-center">
        <svg width="18" height="18" viewBox="0 0 18 18"><rect x="3" y="4" width="14" height="12" fill="none" stroke="#fff" /><rect x="4" y="6" width="6" height="9" fill="#fff" /><path d="M1 2V6M4 2V6M0 6H5V8H0Z" stroke="#fff" fill="#fff" strokeWidth="0.6" /></svg>
      </div>
      <div className="w-[27px] flex justify-center">
        <svg width="20" height="20" viewBox="0 0 20 20"><path d="M2 18Q3 6 15 2M7 18Q8 10 15 7M11 18Q11 14 15 12" stroke="#cfd8df" strokeWidth="1" fill="none" /><rect x="13" y="16" width="2.5" height="2.5" fill="#fff" /></svg>
      </div>
      <div className="w-[27px] flex justify-center">
        <svg width="20" height="20" viewBox="0 0 20 20"><path d="M2 7H6L10 3V17L6 13H2Z" fill="none" stroke="#ddd" /><path d="M13 7Q15 10 13 13M15 5Q18 10 15 15" stroke="#aaa" fill="none" /></svg>
      </div>
      <div className="ml-[4px] w-[36px] text-center text-[14px]">ITA</div>
      <div className="w-[96px] flex flex-col items-center text-[14px] leading-[22px]">
        <span>10:06</span>
        <span>20/10/2023</span>
      </div>
      <div className="relative w-[41px] h-full flex items-center justify-center">
        <svg className="-mt-[3px] -ml-[5px]" width="18" height="28" viewBox="0 0 18 28"><rect y="0" width="18" height="28" fill="#fff" /><path d="M2 14H14M2 18H14M2 22H10" stroke="#012c50" strokeWidth="1.5" /></svg>
        <div className="absolute left-[18px] top-[25px] w-[20px] h-[20px] rounded-full border-2 border-[#b8d2e8] bg-[#123f68] text-[14px] flex items-center justify-center leading-none">1</div>
      </div>
      <div className="w-[20px] h-full flex justify-end pr-[4px]"><div className="w-px h-full bg-[#2b5a82]" /></div>
    </div>
  </div>
);

export default function App() {
  return (
    <div className="w-[1920px] h-[1080px] bg-white overflow-hidden font-['Liberation_Sans',Arial,sans-serif]">
      <div className="w-[1900px] h-[1003px] flex flex-col">
        <Ribbon />
        <div className="flex-1 flex min-h-0">
          <LeftColumn />
          <div className="flex-1 relative flex flex-col justify-end pb-[7px]">
            <Spiral />
            <Floating />
            <ViewCube />
            <Dialog />
            <div className="flex items-center relative">
              <NavBar />
              <svg className="ml-auto mr-[16px]" width="16" height="16" viewBox="0 0 16 16">
                <circle cx="8" cy="8" r="8" fill="#000" />
                <path d="M3 10Q4 5 9 4Q12 4 12 7L8 8L12 11H5Z" fill="#fff" />
              </svg>
            </div>
          </div>
        </div>
        <Timeline />
        <Taskbar />
      </div>
    </div>
  );
}
